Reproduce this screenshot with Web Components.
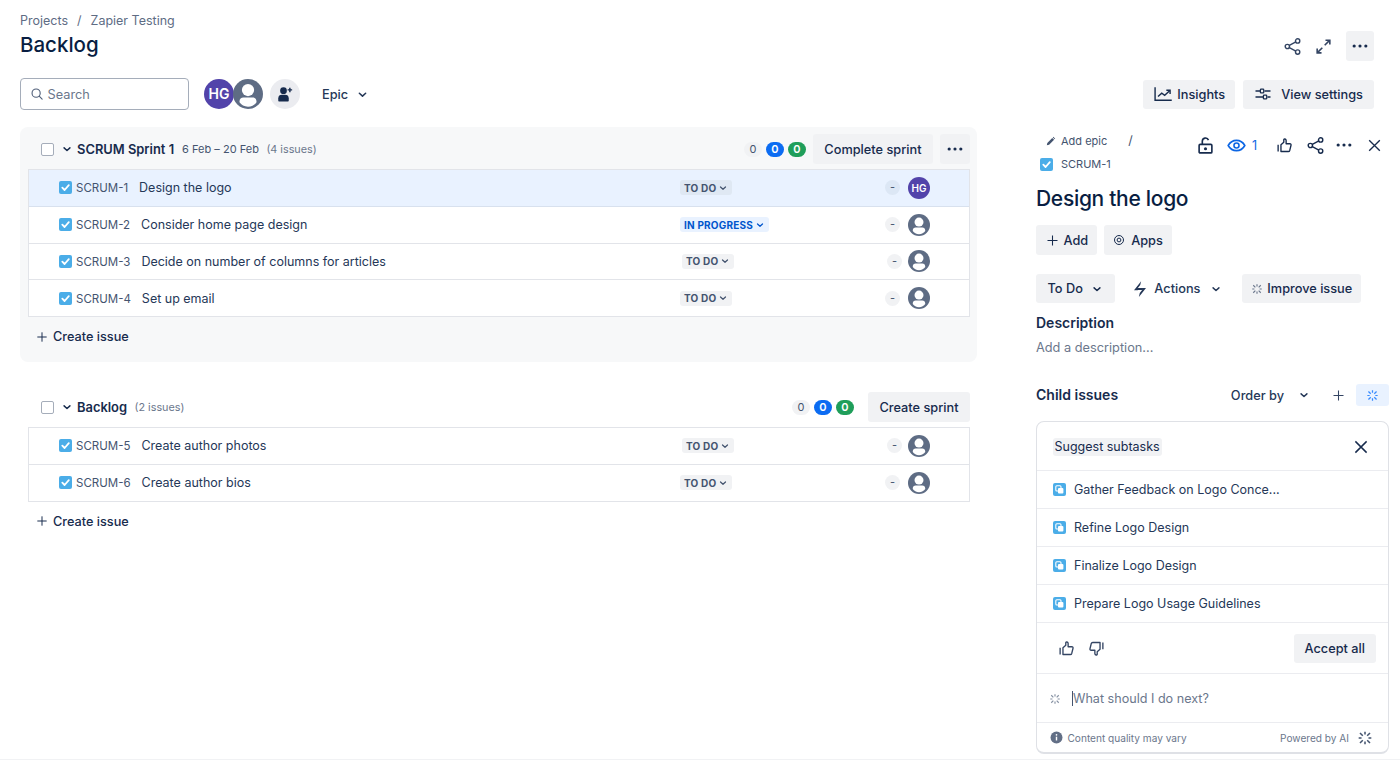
<!DOCTYPE html>
<html lang="en">
<head>
  <meta charset="UTF-8">
  <title>Backlog</title>
  <style>
    html, body { margin: 0; padding: 0; background: #fff; }
    body { font-family: Inter, "Noto Sans", sans-serif; color: #172b4d; overflow: hidden; }
  </style>
</head>
<body>
  <jr-app>
    <jr-page-header slot="header"></jr-page-header>
    <jr-toolbar slot="toolbar"></jr-toolbar>

    <jr-sprint slot="left" active name="SCRUM Sprint 1" dates="6 Feb – 20 Feb" count="4 issues">
      <jr-button slot="actions" h="30">Complete sprint</jr-button>
      <jr-button slot="actions" h="30" w="30"><jr-icon name="dots" size="20"></jr-icon></jr-button>
      <jr-issue issue-key="SCRUM-1" status="TO DO" assignee="hg" selected>Design the logo</jr-issue>
      <jr-issue issue-key="SCRUM-2" status="IN PROGRESS">Consider home page design</jr-issue>
      <jr-issue issue-key="SCRUM-3" status="TO DO" nudge>Decide on number of columns for articles</jr-issue>
      <jr-issue issue-key="SCRUM-4" status="TO DO">Set up email</jr-issue>
    </jr-sprint>

    <jr-sprint slot="left" name="Backlog" count="2 issues">
      <jr-button slot="actions" h="30">Create sprint</jr-button>
      <jr-issue issue-key="SCRUM-5" status="TO DO" nudge>Create author photos</jr-issue>
      <jr-issue issue-key="SCRUM-6" status="TO DO">Create author bios</jr-issue>
    </jr-sprint>

    <jr-detail slot="right"></jr-detail>
  </jr-app>

  <script>
    const ICONS = {
      share: '<g fill="none" stroke="currentColor" stroke-width="1.800"><circle cx="18.500" cy="5" r="2.700"/><circle cx="5.500" cy="12" r="2.700"/><circle cx="18.500" cy="19" r="2.700"/><path d="M8 10.700l8.200-4.400M8 13.300l8.200 4.400"/></g>',
      expand: '<g fill="none" stroke="currentColor" stroke-width="2"><path d="M13.500 10.500L20 4M14.500 4H20v5.500M10.500 13.500L4 20M9.500 20H4v-5.500"/></g>',
      dots: '<g fill="currentColor"><circle cx="5" cy="12" r="1.900"/><circle cx="12" cy="12" r="1.900"/><circle cx="19" cy="12" r="1.900"/></g>',
      x: '<path d="M4.500 4.500l15 15M19.500 4.500l-15 15" fill="none" stroke="currentColor" stroke-width="1.900"/>',
      plus: '<path d="M12 4v16M4 12h16" fill="none" stroke="currentColor" stroke-width="1.700"/>',
      chevron: '<path d="M7 10l5 4.500 5-4.500" fill="none" stroke="currentColor" stroke-width="2.500" stroke-linecap="round" stroke-linejoin="round"/>',
      search: '<g fill="none" stroke="currentColor" stroke-width="1.900"><circle cx="10.500" cy="10.500" r="7"/><path d="M15.800 15.800l5 5" stroke-linecap="round"/></g>',
      insights: '<g fill="none" stroke="currentColor" stroke-width="1.700"><path d="M2.500 4v15.500h20"/><path d="M6 15l4.500-4 3.500 2.500L20 8"/><path d="M16 7.500h4.500V12"/></g>',
      settings: '<g fill="none" stroke="currentColor" stroke-width="1.700"><path d="M2 8h6M14 8h8M2 16h10M18 16h4"/><rect x="8.500" y="5.500" width="4.500" height="5" rx="1"/><rect x="12.500" y="13.500" width="4.500" height="5" rx="1"/></g>',
      lock: '<g fill="none" stroke="currentColor" stroke-width="2.300"><rect x="3" y="10.500" width="18" height="12" rx="1.500"/><path d="M7.500 10.500V6a4.500 4.500 0 0 1 8.700-1.600"/></g><circle cx="12" cy="16.500" r="2.200" fill="currentColor"/>',
      eye: '<g fill="none" stroke="currentColor" stroke-width="2"><path d="M1.500 12C4 7.500 7.500 5.500 12 5.500s8 2 10.500 6.500c-2.500 4.500-6 6.500-10.500 6.500S4 16.500 1.500 12z"/><circle cx="12" cy="12" r="3.200"/></g>',
      thumb: '<g fill="none" stroke="currentColor" stroke-width="1.900" stroke-linejoin="round"><path d="M3 11v9.500"/><path d="M7 11l4-3.500V3.800c0-1.500 3.300-1.500 3.300 1.200v4.500h5.200c1.300 0 2 1 1.700 2.200l-1.800 7.300c-.3 1-.9 1.500-2 1.500H7z"/></g>',
      thumbdown: '<g fill="none" stroke="currentColor" stroke-width="1.900" stroke-linejoin="round"><path d="M21 13V3.500"/><path d="M17 13l-4 3.500v3.700c0 1.500-3.300 1.500-3.300-1.200v-4.500H4.500c-1.300 0-2-1-1.700-2.200l1.800-7.300c.3-1 .9-1.500 2-1.500H17z"/></g>',
      pencil: '<path d="M15.800 4.200l4 4L9 19l-5 1.100L5 15zM17 3l1.200-1.200 4 4L21 7z" fill="currentColor"/>',
      apps: '<g fill="none" stroke="currentColor" stroke-width="2"><circle cx="12" cy="12" r="9"/><circle cx="12" cy="12" r="3.800"/></g>',
      bolt: '<g fill="currentColor"><path d="M13.500 1.500L4 13.500h5l2-2.400H8.900l3.400-4.300z"/><path d="M10.500 22.500l9.500-12h-5l-2 2.400h2.100l-3.400 4.300z"/><path d="M9 10.800h6.500l-.9 2.400H8z"/></g>',
      spark: '<path d="M4.500 4.500l4.200 4.200M19.500 4.500l-4.200 4.200M4.500 19.500l4.200-4.200M19.500 19.500l-4.200-4.200M12 2.500v4.300M12 17.200v4.300M2.500 12h4.300M17.200 12h4.300" fill="none" stroke="currentColor" stroke-width="2.300"/>',
      info: '<circle cx="12" cy="12" r="11" fill="currentColor"/><path d="M12 10.500v7" stroke="#fff" stroke-width="2.600"/><circle cx="12" cy="7" r="1.600" fill="#fff"/>',
      addperson: '<circle cx="10" cy="7.500" r="4.500" fill="currentColor"/><path d="M3 21v-3.500C3 14.500 5 13 8 13h4c3 0 5 1.500 5 4.500V21c0 .6-.4 1-1 1H4c-.6 0-1-.4-1-1z" fill="currentColor"/><path d="M18.500 3.500v6M15.500 6.500h6" stroke="currentColor" stroke-width="1.900" fill="none"/>'
    };

    function define(name, css, html, setup) {
      customElements.define(name, class extends HTMLElement {
        connectedCallback() {
          if (this.shadowRoot) return;
          const root = this.attachShadow({ mode: 'open' });
          const body = typeof html === 'function' ? html(this) : html;
          root.innerHTML = `<style>${css}</style>${body}`;
          if (setup) setup(this, root);
        }
      });
    }

    define('jr-icon', `
      :host { display: inline-flex; flex: none; line-height: 0; }
      svg { display: block; }
    `, el => {
      const s = el.getAttribute('size') || 16;
      return `<svg width="${s}" height="${s}" viewBox="0 0 24 24">${ICONS[el.getAttribute('name')] || ''}</svg>`;
    });

    define('jr-check', `
      :host { display: inline-flex; flex: none; line-height: 0; }
    `, el => {
      const s = el.getAttribute('size') || 13;
      return `<svg width="${s}" height="${s}" viewBox="0 0 13 13"><rect width="13" height="13" rx="2" fill="#4bade8"/><path d="M3.300 6.700l2.300 2.300 4.200-4.800" fill="none" stroke="#fff" stroke-width="1.800" stroke-linecap="round" stroke-linejoin="round"/></svg>`;
    });

    define('jr-subtask', `
      :host { display: inline-flex; flex: none; line-height: 0; }
    `, `<svg width="13" height="13" viewBox="0 0 13 13"><rect width="13" height="13" rx="2" fill="#4bade8"/><rect x="2.800" y="2.800" width="5.200" height="5.200" rx="1" fill="none" stroke="#fff" stroke-width="1.100"/><rect x="5" y="5" width="5.400" height="5.400" rx="1" fill="#fff"/></svg>`);

    define('jr-box', `
      :host { display: inline-block; flex: none; box-sizing: border-box; width: 13px; height: 13px; border: 1px solid #a5adba; border-radius: 2px; background: #fff; }
    `, '');

    define('jr-avatar', `
      :host { display: inline-flex; flex: none; line-height: 0; }
      span { display: flex; align-items: center; justify-content: center; border-radius: 50%; background: #5243aa; color: #fff; font-weight: 600; line-height: 1; box-sizing: border-box; }
    `, el => {
      const s = +(el.getAttribute('size') || 22);
      if (el.getAttribute('kind') === 'hg') {
        return `<span style="width:${s}px;height:${s}px;font-size:${Math.round(s * 0.46)}px">HG</span>`;
      }
      return `<svg width="${s}" height="${s}" viewBox="0 0 24 24"><circle cx="12" cy="12" r="12" fill="#5e6c84"/><circle cx="12" cy="8.800" r="4.900" fill="#fff"/><path d="M5.200 18c0-2 1.300-3.200 3.200-3.200h7.200c1.900 0 3.200 1.200 3.200 3.200v.6c-1.400 2.200-3.900 3.500-6.800 3.500s-5.400-1.300-6.800-3.500z" fill="#fff"/></svg>`;
    });

    define('jr-button', `
      :host { display: inline-flex; flex: none; }
      div { display: flex; align-items: center; justify-content: center; gap: var(--btn-gap, 6px); box-sizing: border-box; background: var(--btn-bg, #f1f2f4); border-radius: 3px; color: #172b4d; font-size: 12.750px; font-weight: 500; white-space: nowrap; padding: 0 var(--btn-pad, 11.500px); width: 100%; }
    `, el => {
      const h = el.getAttribute('h') || 29;
      const w = el.getAttribute('w');
      const st = `height:${h}px;` + (w ? `width:${w}px;padding:0;` : '');
      return `<div style="${st}"><slot></slot></div>`;
    });

    define('jr-page-header', `
      :host { display: flex; justify-content: space-between; align-items: flex-start; padding: 13px 26px 0 20px; height: 48px; }
      nav { font-size: 12.500px; color: #5e6c84; line-height: 16px; display: flex; gap: 9px; }
      h1 { margin: 3px 0 0; font-size: 20.500px; line-height: 26px; font-weight: 500; color: #091e42; }
      .right { display: flex; align-items: center; gap: 12px; color: #344563; margin-top: 18px; }
      .right jr-icon[name="expand"] { margin-right: 1px; }
    `, `
      <div>
        <nav><span>Projects</span><span>/</span><span>Zapier Testing</span></nav>
        <h1>Backlog</h1>
      </div>
      <div class="right">
        <jr-icon name="share" size="19"></jr-icon>
        <jr-icon name="expand" size="19"></jr-icon>
        <jr-button h="30" w="28"><jr-icon name="dots" size="20"></jr-icon></jr-button>
      </div>
    `);

    define('jr-toolbar', `
      :host { display: flex; align-items: center; padding: 17px 26px 0 20px; height: 32px; }
      .search { display: flex; align-items: center; gap: 4px; width: 169px; height: 32px; box-sizing: border-box; border: 1.500px solid #a5adba; border-radius: 4px; padding-left: 8.500px; color: #6b778c; font-size: 12.750px; }
      .search jr-icon { color: #505f79; }
      .avatars { display: flex; margin-left: 15px; }
      .avatars jr-avatar + jr-avatar { margin-left: -1px; }
      .add { display: flex; align-items: center; justify-content: center; width: 30px; height: 30px; border-radius: 50%; background: #ebecf0; margin-left: 7px; color: #172b4d; }
      .epic { display: flex; align-items: center; gap: 7px; margin-left: 22px; font-size: 12.750px; font-weight: 500; color: #253858; }
      .grow { flex: 1; }
      .actions { display: flex; gap: 8px; }
    `, `
      <div class="search"><jr-icon name="search" size="14"></jr-icon>Search</div>
      <div class="avatars">
        <jr-avatar kind="hg" size="30"></jr-avatar>
        <jr-avatar size="30"></jr-avatar>
      </div>
      <div class="add"><jr-icon name="addperson" size="18"></jr-icon></div>
      <div class="epic">Epic <jr-icon name="chevron" size="15"></jr-icon></div>
      <div class="grow"></div>
      <div class="actions">
        <jr-button style="--btn-gap:4px;--btn-pad:10px"><jr-icon name="insights" size="20"></jr-icon>Insights</jr-button>
        <jr-button style="--btn-gap:9px;--btn-pad:11px"><jr-icon name="settings" size="18"></jr-icon>View settings</jr-button>
      </div>
    `);

    define('jr-badges', `
      :host { display: inline-flex; gap: 4px; }
      span { display: block; width: 18px; height: 15px; border-radius: 8px; text-align: center; font-size: 11px; line-height: 15px; font-weight: 500; }
      .n { background: #f1f2f4; color: #44546f; font-weight: 400; }
      .b { background: #0c6cf2; color: #fff; font-weight: 600; }
      .g { background: #1f9e5a; color: #fff; font-weight: 600; }
    `, `<span class="n">0</span><span class="b">0</span><span class="g">0</span>`);

    define('jr-sprint', `
      :host { display: block; box-sizing: border-box; padding: 7px 7px 6px 8px; margin-bottom: 23px; border-radius: 8px; }
      :host([active]) { background: #f7f8f9; }
      header { display: flex; align-items: center; height: 30px; padding-left: 13px; }
      header jr-icon { margin-left: 5.500px; color: #172b4d; }
      .name { font-size: 12.900px; font-weight: 600; color: #172b4d; margin-left: 3.500px; }
      .dates { font-size: 11px; color: #44546f; margin-left: 8px; }
      .count { font-size: 10.800px; color: #6b778c; margin-left: 7.500px; }
      .grow { flex: 1; }
      jr-badges { margin-right: var(--badge-gap, 7px); }
      .actions { display: flex; gap: 7px; }
      .list { margin-top: 5px; border: 1px solid #e2e4e9; border-bottom-width: 0; background: #fff; }
      .create { display: flex; align-items: center; gap: 4px; height: 39px; padding-left: 7px; font-size: 12.700px; font-weight: 500; color: #172b4d; }
    `, el => {
      const dates = el.getAttribute('dates');
      return `
      <header style="${el.hasAttribute('active') ? '' : '--badge-gap:14px'}">
        <jr-box></jr-box>
        <jr-icon name="chevron" size="14"></jr-icon>
        <span class="name">${el.getAttribute('name')}</span>
        ${dates ? `<span class="dates">${dates}</span>` : ''}
        <span class="count">(${el.getAttribute('count')})</span>
        <span class="grow"></span>
        <jr-badges></jr-badges>
        <div class="actions"><slot name="actions"></slot></div>
      </header>
      <div class="list"><slot></slot></div>
      <div class="create"><jr-icon name="plus" size="14"></jr-icon>Create issue</div>`;
    });

    define('jr-status', `
      :host { display: inline-flex; }
      span { display: inline-flex; align-items: center; gap: 1px; height: 15px; padding: 0 3px 0 4px; border-radius: 3px; background: #f1f2f4; color: #44546f; font-size: 10px; font-weight: 700; letter-spacing: .2px; white-space: nowrap; }
      :host([kind="progress"]) span { background: #e9f2ff; color: #0055cc; }
      :host([light]) span { background: #dfe8f3; }
    `, `<span><slot></slot><jr-icon name="chevron" size="12"></jr-icon></span>`);

    define('jr-issue', `
      :host { display: grid; grid-template-columns: 651px 205px 1fr; align-items: center; height: 36.750px; box-sizing: border-box; border-bottom: 1px solid #e2e4e9; background: #fff; }
      :host([selected]) { background: #e9f2ff; border-bottom-color: #d8e1ee; }
      .left { display: flex; align-items: center; padding-left: 30px; white-space: nowrap; }
      .key { font-size: 11.500px; color: #44546f; margin-left: 4px; padding-top: 1px; }
      .title { font-size: 12.500px; color: #253858; margin-left: 11px; }
      .status, .dash-wrap { display: flex; align-items: center; }
      :host([nudge]) .status { padding-left: 2px; }
      .dash { width: 15px; height: 15px; border-radius: 50%; background: #f1f2f4; color: #44546f; font-size: 11px; line-height: 15px; text-align: center; }
      :host([selected]) .dash { background: #dce7f5; }
      :host([nudge]) .dash { margin-left: 2px; }
      .assignee { display: flex; margin-left: 8px; }
    `, el => {
      const st = el.getAttribute('status');
      const kind = st === 'IN PROGRESS' ? 'progress' : 'todo';
      const light = el.hasAttribute('selected') ? 'light' : '';
      return `
      <div class="left">
        <jr-check></jr-check>
        <span class="key">${el.getAttribute('issue-key')}</span>
        <span class="title"><slot></slot></span>
      </div>
      <div class="status"><jr-status kind="${kind}" ${light}>${st}</jr-status></div>
      <div class="dash-wrap">
        <span class="dash">-</span>
        <span class="assignee" style="margin-left:${el.hasAttribute('nudge') ? 6 : 8}px"><jr-avatar size="22" kind="${el.getAttribute('assignee') || ''}"></jr-avatar></span>
      </div>`;
    });

    define('jr-suggest', `
      :host { display: block; box-sizing: border-box; height: 333px; border: 1.500px solid #dfe1e6; border-bottom-width: 2px; border-radius: 8px; background: #fff; }
      .head { display: flex; align-items: center; justify-content: space-between; height: 49px; padding: 1px 18px 0 15.500px; box-sizing: border-box; border-bottom: 1px solid #ebecf0; }
      .head span { background: #f1f2f4; border-radius: 3px; padding: 0 2px; font-size: 12.500px; line-height: 18px; color: #172b4d; }
      .item { display: flex; align-items: center; gap: 8px; height: 38px; box-sizing: border-box; padding-left: 16px; border-bottom: 1px solid #ebecf0; font-size: 12.500px; color: #253858; white-space: nowrap; }
      .feedback { display: flex; align-items: center; height: 51px; box-sizing: border-box; padding: 0 12px 0 21px; border-bottom: 1px solid #ebecf0; color: #344563; --btn-pad: 11px; }
      .feedback jr-icon + jr-icon { margin-left: 13px; }
      .grow { flex: 1; }
      .input { display: flex; align-items: center; height: 49px; box-sizing: border-box; padding: 1px 0 0 12px; border-bottom: 1px solid #ebecf0; font-size: 12.600px; color: #6b778c; }
      .input jr-icon { color: #8590a2; margin-right: 11px; }
      .caret { width: 1px; height: 15px; background: #44546f; }
      .foot { display: flex; align-items: center; height: 29px; padding: 0 15px 0 12.500px; font-size: 10.100px; color: #6b778c; gap: 5px; }
      .foot .i { color: #626f86; }
      .foot .s { color: #44546f; margin-left: 3px; }
    `, `
      <div class="head"><span>Suggest subtasks</span><jr-icon name="x" size="18"></jr-icon></div>
      <div class="item"><jr-subtask></jr-subtask>Gather Feedback on Logo Conce...</div>
      <div class="item"><jr-subtask></jr-subtask>Refine Logo Design</div>
      <div class="item"><jr-subtask></jr-subtask>Finalize Logo Design</div>
      <div class="item"><jr-subtask></jr-subtask>Prepare Logo Usage Guidelines</div>
      <div class="feedback">
        <jr-icon name="thumb" size="17"></jr-icon>
        <jr-icon name="thumbdown" size="17"></jr-icon>
        <span class="grow"></span>
        <jr-button>Accept all</jr-button>
      </div>
      <div class="input"><jr-icon name="spark" size="12"></jr-icon><span class="caret"></span>What should I do next?</div>
      <div class="foot">
        <jr-icon class="i" name="info" size="13"></jr-icon>Content quality may vary
        <span class="grow"></span>Powered by AI
        <jr-icon class="s" name="spark" size="16"></jr-icon>
      </div>
    `);

    define('jr-detail', `
      :host { display: block; }
      .top { display: flex; justify-content: space-between; height: 46px; padding-right: 6px; padding-top: 6px; box-sizing: border-box; align-items: flex-start; }
      .crumbs { font-size: 11px; color: #44546f; line-height: 16px; }
      .crumbs div { display: flex; align-items: center; }
      .epic { padding-left: 9px; gap: 5px; }
      .epic b { font-weight: 400; margin-left: 16px; font-size: 12.500px; }
      .key { padding-left: 4px; gap: 8px; margin-top: 7px; }
      .icons { display: flex; align-items: center; color: #172b4d; margin-top: 2px; }
      .eye { color: #0c66e4; font-size: 12.500px; display: flex; align-items: center; gap: 5.500px; }
      h2 { margin: 12px 0 0; font-size: 21px; line-height: 28px; font-weight: 500; color: #091e42; letter-spacing: -.3px; }
      .row { display: flex; align-items: center; }
      .quick { gap: 7px; margin-top: 12px; }
      .status { margin-top: 19px; }
      .act { display: flex; align-items: center; margin-left: 16px; font-size: 12.750px; font-weight: 500; color: #253858; width: 111px; gap: 5px; }
      h3 { margin: 0; font-size: 14px; line-height: 20px; font-weight: 600; color: #172b4d; }
      .desc { margin-top: 10px; }
      .ph { font-size: 12.750px; color: #6b778c; line-height: 18px; margin-top: 6px; }
      .child { margin-top: 27px; height: 22px; margin-bottom: 15px; }
      .order { margin-left: auto; font-size: 12.750px; font-weight: 500; color: #253858; display: flex; align-items: center; gap: 13px; }
      .plus { margin-left: 20px; color: #344563; }
      .ai { display: flex; align-items: center; justify-content: center; width: 33px; height: 22px; background: #e9f2ff; border-radius: 3px; margin-left: 10px; color: #388bff; }
    `, `
      <div class="top">
        <div class="crumbs">
          <div class="epic"><jr-icon name="pencil" size="11"></jr-icon>Add epic<b>/</b></div>
          <div class="key"><jr-check></jr-check>SCRUM-1</div>
        </div>
        <div class="icons">
          <jr-icon name="lock" size="17"></jr-icon>
          <span class="eye" style="margin-left:13px"><jr-icon name="eye" size="19"></jr-icon>1</span>
          <jr-icon name="thumb" size="17" style="margin-left:18.500px"></jr-icon>
          <jr-icon name="share" size="19" style="margin-left:13px"></jr-icon>
          <jr-icon name="dots" size="20" style="margin-left:9.500px"></jr-icon>
          <jr-icon name="x" size="17" style="margin-left:12px"></jr-icon>
        </div>
      </div>
      <h2>Design the logo</h2>
      <div class="row quick">
        <jr-button h="30" style="--btn-gap:4px;--btn-pad:8.500px"><jr-icon name="plus" size="15"></jr-icon>Add</jr-button>
        <jr-button h="30" style="--btn-gap:6px;--btn-pad:9.500px"><jr-icon name="apps" size="12"></jr-icon>Apps</jr-button>
      </div>
      <div class="row status">
        <jr-button style="--btn-gap:7px"><span>To Do</span><jr-icon name="chevron" size="14"></jr-icon></jr-button>
        <div class="act"><jr-icon name="bolt" size="18"></jr-icon>Actions<jr-icon name="chevron" size="14" style="margin-left:4px"></jr-icon></div>
        <jr-button style="--btn-gap:4px;--btn-pad:9px"><jr-icon name="spark" size="12" style="color:#6b778c"></jr-icon>Improve issue</jr-button>
      </div>
      <div class="desc"><h3>Description</h3><div class="ph">Add a description...</div></div>
      <div class="row child">
        <h3>Child issues</h3>
        <span class="order">Order by <jr-icon name="chevron" size="14"></jr-icon></span>
        <jr-icon class="plus" name="plus" size="15"></jr-icon>
        <span class="ai"><jr-icon name="spark" size="13"></jr-icon></span>
      </div>
      <jr-suggest></jr-suggest>
    `);

    define('jr-app', `
      :host { display: block; box-sizing: border-box; height: 760px; overflow: hidden; border-bottom: 1px solid #f1f2f4; }
      .cols { display: grid; grid-template-columns: 957px 353px; column-gap: 59px; padding: 17px 0 0 20px; }
    `, `
      <slot name="header"></slot>
      <slot name="toolbar"></slot>
      <div class="cols">
        <div><slot name="left"></slot></div>
        <div><slot name="right"></slot></div>
      </div>
    `);
  </script>
</body>
</html>
